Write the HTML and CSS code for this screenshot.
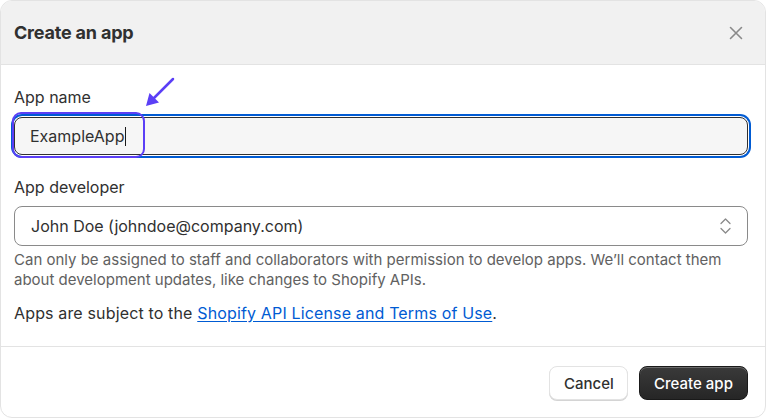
FILE: index.html
```html
<!DOCTYPE html>
<html lang="en">

<head>
    <meta charset="UTF-8">
    <meta name="viewport" content="width=device-width, initial-scale=1.0">
    <title>Create an app</title>
    <link rel="stylesheet" href="styles.css">
</head>

<body>
    <div class="modal">
        <div class="modal-header">
            <h2 class="modal-title">Create an app</h2>
            <button class="close-btn" aria-label="Close">
                <svg width="14" height="14" viewBox="0 0 14 14">
                    <path d="M1.5 1.5 L12.5 12.5 M12.5 1.5 L1.5 12.5" stroke="#8a8a8a" stroke-width="1.6"
                        stroke-linecap="round" />
                </svg>
            </button>
        </div>

        <div class="modal-body">
            <div class="field field-name">
                <label class="field-label">App name</label>
                <div class="text-field focused">
                    <span class="text-value">ExampleApp</span><span class="caret"></span>
                </div>
                <div class="highlight-box"></div>
                <svg class="pointer-arrow" width="40" height="40" viewBox="0 0 40 40">
                    <path d="M33 3 L12 24" stroke="#5b3ff6" stroke-width="2.5" stroke-linecap="round" />
                    <path d="M6 30 L9.5 17 L19 26.5 Z" fill="#5b3ff6" />
                </svg>
            </div>

            <div class="field field-dev">
                <label class="field-label">App developer</label>
                <div class="select">
                    <span>John Doe (johndoe@company.com)</span>
                    <svg width="11" height="16" viewBox="0 0 11 16">
                        <path d="M1 5.5 L5.5 1 L10 5.5 M1 10.5 L5.5 15 L10 10.5" fill="none" stroke="#8a8a8a"
                            stroke-width="1.3" stroke-linecap="round" stroke-linejoin="round" />
                    </svg>
                </div>
                <p class="help-text">Can only be assigned to staff and collaborators with permission to develop apps.
                    We’ll contact them about development updates, like changes to Shopify APIs.</p>
            </div>

            <p class="terms">Apps are subject to the <a href="#">Shopify API License and Terms of Use</a>.</p>
        </div>

        <div class="modal-footer">
            <button class="btn btn-secondary">Cancel</button>
            <button class="btn btn-primary">Create app</button>
        </div>
    </div>
</body>

</html>
```

FILE: styles.css
```css
:root {
    --text-color: #303030;
    --border-color: #e3e3e3;
    --link-color: #005bd3;
    --focus-color: #005bd3;
    --note-color: #5b3ff6;
}

body {
    margin: 0;
    background-color: #ffffff;
    color: var(--text-color);
    font-family: Inter, "Noto Sans", sans-serif;
}

.modal {
    width: 766px;
    height: 418px;
    border: 1px solid var(--border-color);
    border-radius: 12px;
    box-sizing: border-box;
    overflow: hidden;
    display: flex;
    flex-direction: column;
    background-color: #ffffff;
}

.modal-header {
    height: 64px;
    flex-shrink: 0;
    box-sizing: border-box;
    background-color: #f1f1f1;
    border-bottom: 1px solid var(--border-color);
    display: flex;
    align-items: center;
    justify-content: space-between;
    padding: 0 22px 0 13px;
}

.modal-title {
    margin: 0;
    font-size: 18px;
    font-weight: 650;
    letter-spacing: -0.2px;
    color: #303030;
}

.close-btn {
    border: none;
    background: none;
    padding: 0;
    width: 14px;
    height: 14px;
    cursor: pointer;
}

.modal-body {
    padding: 22px 17px 0 13px;
    height: 282px;
    box-sizing: border-box;
    border-bottom: 1px solid var(--border-color);
}

.field {
    position: relative;
}

.field-label {
    display: block;
    font-size: 16px;
    line-height: 20px;
}

.text-field {
    margin-top: 10px;
    height: 38px;
    box-sizing: border-box;
    border: 1px solid #303030;
    border-radius: 8px;
    background-color: #f6f6f6;
    display: flex;
    align-items: center;
    padding-left: 15px;
    font-size: 16px;
}

.text-field.focused {
    box-shadow: 0 0 0 1px #ffffff, 0 0 0 3px var(--focus-color);
}

.text-value {
    color: #303030;
}

.caret {
    display: inline-block;
    width: 1px;
    height: 19px;
    margin-left: 1px;
    background-color: #1a1a1a;
}

.highlight-box {
    position: absolute;
    left: -2px;
    top: 25px;
    width: 133px;
    height: 46px;
    box-sizing: border-box;
    border: 2.5px solid var(--note-color);
    border-radius: 9px;
}

.pointer-arrow {
    position: absolute;
    left: 126px;
    top: -11px;
}

.field-dev {
    margin-top: 22px;
}

.select {
    margin-top: 9px;
    height: 40px;
    box-sizing: border-box;
    border: 1px solid #8a8a8a;
    border-radius: 8px;
    display: flex;
    align-items: center;
    justify-content: space-between;
    padding: 0 16px 0 16px;
    font-size: 16px;
}

.help-text {
    margin: 4px 0 0;
    font-size: 15px;
    line-height: 20px;
    color: #616161;
}

.terms {
    margin: 13px 0 0;
    font-size: 16px;
    letter-spacing: 0.15px;
    line-height: 20px;
}

.terms a {
    color: var(--link-color);
    text-underline-offset: 2px;
}

.modal-footer {
    flex: 1;
    display: flex;
    justify-content: flex-end;
    align-items: flex-start;
    gap: 11px;
    padding: 19px 17px 0 0;
}

.btn {
    height: 34px;
    border-radius: 8px;
    font-family: inherit;
    font-size: 15px;
    font-weight: 500;
    padding: 0 14px;
    cursor: pointer;
}

.btn-secondary {
    background-color: #ffffff;
    color: #303030;
    border: 1px solid var(--border-color);
    box-shadow: 0 1px 0 #d4d4d4;
    width: 79px;
}

.btn-primary {
    background: linear-gradient(#3a3a3a, #262626);
    color: #ffffff;
    border: 1px solid #1a1a1a;
    box-shadow: inset 0 1px 0 rgba(255, 255, 255, 0.25);
    width: 109px;
}
```
